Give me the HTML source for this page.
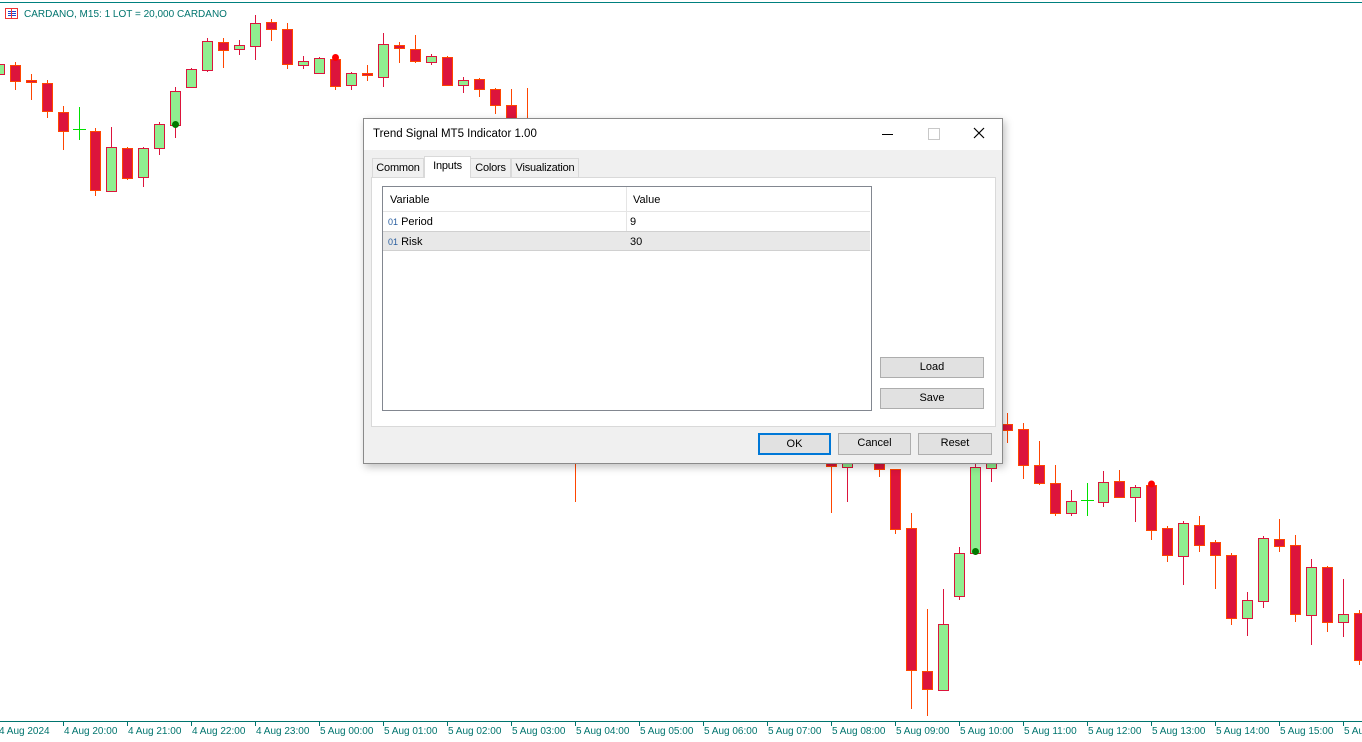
<!DOCTYPE html>
<html><head><meta charset="utf-8"><style>
body{margin:0;width:1362px;height:742px;overflow:hidden;background:#fff;font-family:"Liberation Sans",sans-serif;position:relative}
#c{position:absolute;left:0;top:0}
.dlg{position:absolute;left:363px;top:118px;width:638px;height:344px;background:#f0f0f0;border:1px solid #8a8a8a;box-shadow:2px 3px 8px rgba(0,0,0,.25);font-size:11px;color:#000}
.tb{position:absolute;left:0;top:0;width:638px;height:31px;background:#fff}
.ab{position:absolute;font-size:11px}
.btn{position:absolute;background:#e1e1e1;border:1px solid #adadad;box-sizing:border-box;text-align:center;font-size:11px;line-height:19px}
.tab{position:absolute;top:39px;height:19px;border:1px solid #d9d9d9;border-bottom:none;background:#f0f0f0;box-sizing:border-box;line-height:18px;text-align:center;font-size:11px;letter-spacing:-0.2px}
</style></head><body>
<svg id="c" width="1362" height="742" xmlns="http://www.w3.org/2000/svg">
<line x1="0" y1="2.5" x2="1362" y2="2.5" stroke="#00807f" stroke-width="1"/>
<g id="cs"></g>
<line x1="0" y1="721.5" x2="1362" y2="721.5" stroke="#00746e"/>
<g id="ax" font-family="Liberation Sans, sans-serif" font-size="10" fill="#00746e"></g>
<rect x="5.5" y="8.5" width="12" height="10" fill="none" stroke="#e33" />
<line x1="8" y1="11.5" x2="16" y2="11.5" stroke="#24c"/><line x1="8" y1="13.5" x2="16" y2="13.5" stroke="#24c"/><line x1="8" y1="15.5" x2="16" y2="15.5" stroke="#24c"/><line x1="11.5" y1="9" x2="11.5" y2="18" stroke="#e33"/>
<text x="24" y="17" font-family="Liberation Sans, sans-serif" font-size="10" fill="#00746e">CARDANO, M15:  1 LOT = 20,000 CARDANO</text>
</svg>
<div class="dlg">
<div class="tb"></div>
<div class="ab" style="left:9px;top:9px;font-size:11.5px">Trend Signal MT5 Indicator 1.00</div>
<div style="position:absolute;left:518px;top:15px;width:11px;height:1px;background:#000"></div>
<div style="position:absolute;left:564px;top:9px;width:10px;height:10px;border:1px solid #c8c8c8"></div>
<svg style="position:absolute;left:609px;top:8px" width="12" height="12"><path d="M1 1L11 11M11 1L1 11" stroke="#000" stroke-width="1.2"/></svg>
<div class="tab" style="left:8px;width:52px">Common</div>
<div class="tab" style="left:60px;top:37px;height:22px;width:47px;background:#fff;z-index:2">Inputs</div>
<div class="tab" style="left:106px;width:41px">Colors</div>
<div class="tab" style="left:147px;width:68px">Visualization</div>
<div style="position:absolute;left:7px;top:58px;width:623px;height:248px;background:#fff;border:1px solid #d9d9d9"></div>
<div style="position:absolute;left:18px;top:67px;width:488px;height:223px;background:#fff;border:1px solid #828790"></div>
<div style="position:absolute;left:262px;top:68px;width:1px;height:64px;background:#e5e5e5"></div>
<div style="position:absolute;left:19px;top:92px;width:487px;height:1px;background:#e5e5e5"></div>
<div style="position:absolute;left:19px;top:112px;width:487px;height:20px;background:#e8e8e8;border-top:1px solid #d0d0d0;border-bottom:1px solid #d0d0d0;box-sizing:border-box"></div>
<div class="ab" style="left:26px;top:75px">Variable</div>
<div class="ab" style="left:269px;top:75px">Value</div>
<div class="ab" style="left:24px;top:97px"><span style="color:#2a5fa0;font-size:9px">01</span> Period</div>
<div class="ab" style="left:266px;top:97px">9</div>
<div class="ab" style="left:24px;top:117px"><span style="color:#2a5fa0;font-size:9px">01</span> Risk</div>
<div class="ab" style="left:266px;top:117px">30</div>
<div class="btn" style="left:516px;top:238px;width:104px;height:21px">Load</div>
<div class="btn" style="left:516px;top:269px;width:104px;height:21px">Save</div>
<div class="btn" style="left:394px;top:314px;width:73px;height:22px;border:2px solid #0078d7;line-height:18px">OK</div>
<div class="btn" style="left:474px;top:314px;width:73px;height:22px">Cancel</div>
<div class="btn" style="left:554px;top:314px;width:74px;height:22px">Reset</div>
</div>
<script>
var C=[
[-1,60,64,74,76,1],[15,62,65,81,90,0],[31,74,80,82,100,0],[47,80,83,111,118,0],[63,106,112,131,150,0],[79,107,129,131,140,2],
[95,128,131,190,196,0],[111,127,147,191,192,1],[127,147,148,178,180,0],[143,147,148,177,187,1],[159,122,124,148,155,1],[175,87,91,125,138,1],
[191,68,69,87,88,1],[207,38,41,70,72,1],[223,38,42,50,68,0],[239,40,45,49,55,1],[255,15,23,46,60,1],[271,19,22,29,41,0],
[287,23,29,64,69,0],[303,56,61,65,69,1],[319,57,58,73,74,1],[335,57,59,86,90,0],[351,72,73,85,90,1],[367,65,73,75,81,0],
[383,33,44,77,87,1],[399,42,45,48,63,0],[415,35,49,61,63,0],[431,54,56,62,65,1],[447,56,57,85,86,0],[463,77,80,85,93,1],
[479,78,79,89,97,0],[495,88,89,105,114,0],[511,89,105,140,150,0],[527,88,120,150,160,0],
[575,420,440,455,502,0],
[831,440,455,466,513,0],[847,440,455,467,502,1],[879,440,462,469,477,0],[895,469,469,529,534,0],[911,513,528,670,709,0],[927,609,671,689,716,0],
[943,589,624,690,691,1],[959,547,553,596,600,1],[975,455,467,553,555,1],[991,440,455,468,482,1],[1007,413,424,430,443,0],[1023,423,429,465,479,0],
[1039,441,465,483,485,0],[1055,465,483,513,516,0],[1071,490,501,513,516,1],[1087,483,500,502,516,2],[1103,471,482,502,507,1],[1119,470,481,497,498,0],
[1135,485,487,497,522,1],[1151,484,485,530,540,0],[1167,526,528,555,562,0],[1183,521,523,556,585,1],[1199,516,525,545,552,0],[1215,540,542,555,589,0],
[1231,553,555,618,625,0],[1247,592,600,618,636,1],[1263,536,538,601,608,1],[1279,519,539,546,552,0],[1295,535,545,614,622,0],[1311,559,567,615,645,1],
[1327,566,567,622,632,0],[1343,579,614,622,637,1],[1359,610,613,660,665,0]];
var s='';
C.forEach(function(c){var x=c[0],t=c[5];
if(t==2){s+='<line x1="'+(x+.5)+'" y1="'+c[1]+'" x2="'+(x+.5)+'" y2="'+c[4]+'" stroke="#00e000"/><line x1="'+(x-6)+'" y1="'+(c[2]+.5)+'" x2="'+(x+7)+'" y2="'+(c[2]+.5)+'" stroke="#00e000"/>';return;}
var st=t?'#dc143c':'#ff4500',f=t?'#90ee90':'#dc143c';
s+='<line x1="'+(x+.5)+'" y1="'+c[1]+'" x2="'+(x+.5)+'" y2="'+c[4]+'" stroke="'+st+'"/>';
s+='<rect x="'+(x-4.5)+'" y="'+(c[2]+.5)+'" width="10" height="'+Math.max(1,c[3]-c[2])+'" fill="'+f+'" stroke="'+st+'"/>';});
s+='<circle cx="175.5" cy="124.5" r="3.5" fill="#007a00"/><circle cx="975.5" cy="551.5" r="3.5" fill="#007a00"/>';
s+='<circle cx="335.5" cy="57.5" r="3.5" fill="#f00"/><circle cx="1151.5" cy="484" r="3.5" fill="#f00"/>';
document.getElementById('cs').innerHTML=s;
var L=['4 Aug 20:00','4 Aug 21:00','4 Aug 22:00','4 Aug 23:00','5 Aug 00:00','5 Aug 01:00','5 Aug 02:00','5 Aug 03:00','5 Aug 04:00','5 Aug 05:00','5 Aug 06:00','5 Aug 07:00','5 Aug 08:00','5 Aug 09:00','5 Aug 10:00','5 Aug 11:00','5 Aug 12:00','5 Aug 13:00','5 Aug 14:00','5 Aug 15:00','5 Aug 16:00'];
var a='<text x="-1" y="734">4 Aug 2024</text>';
L.forEach(function(l,i){var x=63+64*i;a+='<line x1="'+(x+.5)+'" y1="721" x2="'+(x+.5)+'" y2="726" stroke="#00746e"/><text x="'+(x+1)+'" y="734">'+l+'</text>';});
document.getElementById('ax').innerHTML=a;
</script>
</body></html>
